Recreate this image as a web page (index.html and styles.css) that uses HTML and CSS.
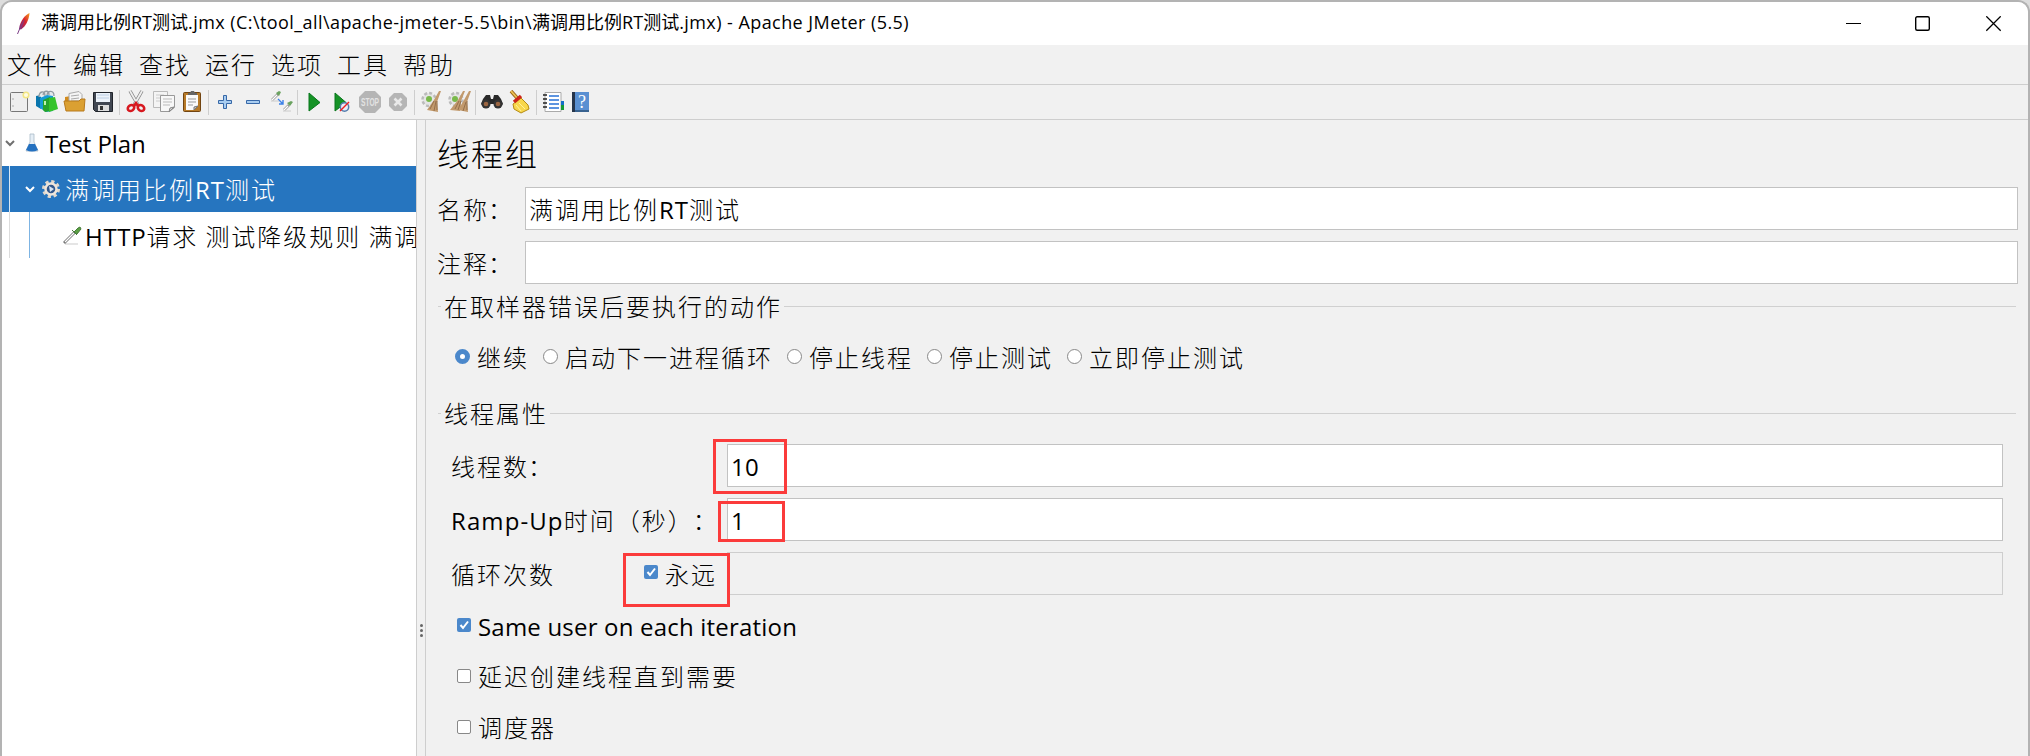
FILE: index.html
```html
<!DOCTYPE html>
<html lang="zh-CN">
<head>
<meta charset="utf-8">
<title>Apache JMeter (5.5)</title>
<link rel="stylesheet" href="styles.css">
</head>
<body>
<div class="window">
  <header class="titlebar">
    <svg class="feather" width="16" height="24" viewBox="0 0 16 24"><defs><linearGradient id="fe" x1="1" y1="0" x2="0" y2="1"><stop offset="0" stop-color="#f6a01c"/><stop offset=".45" stop-color="#d9232e"/><stop offset="1" stop-color="#7a2a80"/></linearGradient></defs><path d="M13.500 1C9 3 4 9 3 17l2 .5C10 14 13 8 13.500 1Z" fill="url(#fe)"/><path d="M4 16 1.500 22M8 8 4.500 16" stroke="#7b3d86" stroke-width="1"/></svg>
    <h1 class="title">满调用比例RT测试<span class="tl">.jmx (C:\tool_all\apache-jmeter-5.5\bin\</span>满调用比例RT测试<span class="tl">.jmx) - Apache JMeter (5.5)</span></h1>
    <svg class="controls" width="156" height="16" viewBox="0 0 156 16" fill="none" stroke="#000"><path d="M0 7.500h15"/><rect x="69.700" y=".7" width="13.600" height="13.600" rx="1.500" stroke-width="1.400"/><path d="m140.300.3 14.400 14.400m0-14.400-14.400 14.400" stroke-width="1.300"/></svg>
  </header>
  <nav class="menu"><span>文件</span><span>编辑</span><span>查找</span><span>运行</span><span>选项</span><span>工具</span><span>帮助</span></nav>
  <div class="toolbar">
    <svg viewBox="0 0 28 24"><rect x="5.500" y="2.500" width="17" height="19" rx="1" fill="#eee" stroke="#777"/><path d="M8 8v2m0 5v2" stroke="#aaa"/><circle cx="21" cy="5" r="2.800" fill="#fffce0" stroke="#f3e684" stroke-width="1.500"/></svg>
    <svg viewBox="0 0 28 24"><path d="M3 6 8 5v14l-5-3Z" fill="#0875ad"/><path d="M6 7c0-6 6-7 6-1m-2-1c1-5 6-5 6 0m-2 0c1-5 7-5 7 1" fill="#e5eaec" stroke="#929ca3" stroke-width="1.300"/><path d="m7 8 7-3 6 1v15l-7 1-6-4Z" fill="#159bd5"/><path d="m10 10 7-3v14l-5 1-2-2Z" fill="#25a42b"/><path d="m16 8 6-1 3 12-9 3Z" fill="#34c32a"/><path d="M12 11v4" stroke="#bff2ae" stroke-width="2"/></svg>
    <svg viewBox="0 0 28 24"><path d="M4 13V7l6-1v7" fill="#d28b1d"/><path d="M8 3.500 18 1.500l3 3v9H8Z" fill="#f5f5f5" stroke="#aaa"/><path d="m10 6 8-1m-8 4 8-1m-8 3h8" stroke="#aaa"/><path d="M3 11h15l2-2h4l-1 12H5Z" fill="#dba032" stroke="#b87a1c"/></svg>
    <svg viewBox="0 0 28 24"><path d="M4.500 2.500h19v19h-17l-2-2Z" fill="#414752" stroke="#20242b"/><path d="M7 3h14v9H7Z" fill="#edf3fa"/><path d="M8 5h12M8 8h12" stroke="#bed0e5"/><path d="M9 15h11v6H9Z" fill="#ddd"/><path d="M11 16h3v4h-3Z" fill="#333"/></svg>
    <i class="sep"></i>
    <svg viewBox="0 0 28 24"><path d="m8 1 8 14M20 1l-8 14" stroke="#888" stroke-width="3.400"/><path d="m8 1 8 14M20 1l-8 14" stroke="#eee" stroke-width="1.800"/><g fill="none" stroke="#d71920" stroke-width="2.600"><ellipse cx="9" cy="18" rx="3.400" ry="2.800" transform="rotate(-35 9 18)"/><ellipse cx="19" cy="18" rx="3.400" ry="2.800" transform="rotate(35 19 18)"/><path d="m12 16 2-3 2 3"/></g></svg>
    <svg viewBox="0 0 28 24"><path d="M3.500 1.500h14v16h-14Z" fill="#f4f4f4" stroke="#bbb"/><path d="M6 5h8M6 8h8M6 11h4" stroke="#ccc"/><path d="M10.500 5.500h14v12l-5 4h-9Z" fill="#f8f8f8" stroke="#999"/><path d="M13 9h9m-9 3h9m-9 3h7" stroke="#bbb"/><path d="m24 17-4 1-1 4Z" fill="#ddd" stroke="#888"/></svg>
    <svg viewBox="0 0 28 24"><rect x="5.500" y="2.500" width="17" height="19" rx="1" fill="#b77a28" stroke="#714411"/><path d="M8 5h12v11l-4 4H8Z" fill="#fafafa"/><path d="M10 9h8m-8 3h8m-8 3h5" stroke="#999"/><path d="M10 5V3h2l1-2h3l1 2h2v2Z" fill="#666"/><path d="m20 16-4 1v3Z" fill="#ccc" stroke="#777"/></svg>
    <i class="sep"></i>
    <svg viewBox="0 0 28 24"><path d="M12.500 5.500h3v5h5v3h-5v5h-3v-5h-5v-3h5Z" fill="#a9cdf0" stroke="#3768a8"/></svg>
    <svg viewBox="0 0 28 24"><path d="M7.500 10.500h13v3h-13Z" fill="#a9cdf0" stroke="#3768a8"/></svg>
    <svg viewBox="0 0 28 24"><path d="m5 10 6-6m6 16 5-5" stroke="#999" stroke-width="2.600"/><path d="m5 10 5-5m7 15 4-4" stroke="#fff" stroke-width="1.200"/><path d="m9 3 3 3 2-4-2-1Zm11 10 3 3 3-4-2-1Z" fill="#6aa25f"/><path d="m11 9 5 5m0-4v4h-4" stroke="#3b80e8" stroke-width="1.400" fill="none"/><path d="M4 11h8m4 10h8" stroke="#ccc"/></svg>
    <i class="sep"></i>
    <svg viewBox="0 0 28 24"><path d="m9 3 11 9.500L9 21Z" fill="#159326" stroke="#08761c"/></svg>
    <svg viewBox="0 0 28 24"><path d="m7 3 11 9.500L7 21Z" fill="#159326" stroke="#08761c"/><circle cx="16.500" cy="17" r="4.200" fill="#e8eef8" stroke="#567dad" stroke-width="1.500"/><path d="m12 21 9-9" stroke="#e22" stroke-width="1.500"/></svg>
    <svg viewBox="0 0 28 24"><path d="M9 1h10l6 6v10l-6 6H9l-6-6V7Z" fill="#b5b5b5"/><text x="14" y="16" text-anchor="middle" textLength="18" lengthAdjust="spacingAndGlyphs" class="stoptext">STOP</text></svg>
    <svg viewBox="0 0 28 24"><path d="M10 3h8l5 5v8l-5 5h-8l-5-5V8Z" fill="#b5b5b5"/><path d="m10.500 8.500 7 7m0-7-7 7" stroke="#e9e9e9" stroke-width="2.600"/></svg>
    <i class="sep"></i>
    <svg viewBox="0 0 28 24"><circle cx="12" cy="9.500" r="6.500" fill="#e5e5e5" stroke="#bbb" stroke-width="2.500" stroke-dasharray="3 2"/><circle cx="12" cy="9" r="3" fill="#79b94b"/><path d="m22 1 2 0-4 11 1 10-11-2 7-10Z" fill="#c29a6d"/><path d="m19 11-2 10m0-10-4 8m7-8v9" stroke="#94704c"/></svg>
    <svg viewBox="0 0 28 24"><circle cx="11" cy="9.500" r="6.500" fill="#e5e5e5" stroke="#bbb" stroke-width="2.500" stroke-dasharray="3 2"/><circle cx="10" cy="9" r="3" fill="#79b94b"/><path d="m18 1 2 0-4 10-1 10-10-1 8-10Zm6 0h2l-4 11 1 10-10-2 6-10Z" fill="#c29a6d"/><path d="m21 12-3 9m-4-10-4 8m12-8v9m-6-9-3 9" stroke="#94704c"/></svg>
    <i class="sep"></i>
    <svg viewBox="0 0 28 24"><path d="m5 9 3-4h4l1 4h2l1-4h4l3 4 2 5-4 4-5-4h-4l-5 4-4-4Z" fill="#292929"/><circle cx="8" cy="14" r="4.500" fill="#333"/><circle cx="20" cy="14" r="4.500" fill="#333"/><circle cx="8" cy="14" r="2.300" fill="#9b6541"/><circle cx="20" cy="14" r="2.300" fill="#9b6541"/></svg>
    <svg viewBox="0 0 28 24"><path d="m5 1 7 8" stroke="#9b6517" stroke-width="3.500"/><path d="m5 1 7 8" stroke="#edc354" stroke-width="1.800"/><path d="m15 8 7 7 1 4-8 4-7-4-1-5 4-3Z" fill="#f8d74c" stroke="#b58b14"/><path d="m8 12 7-6" stroke="#cd2419" stroke-width="3.600"/><path d="m13 13 6 6m-9-4 5 6" stroke="#fff19b"/></svg>
    <i class="sep"></i>
    <svg viewBox="0 0 28 24"><path d="M6 2.500h16v19H6Z" fill="#fff" stroke="#aaa"/><path d="M10 6h10m-10 4h10m-10 4h10m-10 4h10" stroke="#2971d6" stroke-width="1.600"/><path d="M4 5h4M4 9h4m-4 4h4m-4 4h4" stroke="#222" stroke-width="1.600"/><path d="M22 11h3v4h-3Z" fill="#1670c8"/><path d="M22 15h3v5h-3Z" fill="#169b36"/></svg>
    <svg viewBox="0 0 28 24"><path d="M5 2h17v20H5Z" fill="#5a90d2"/><path d="M5 2h3v20H5Z" fill="#26354b"/><path d="M8 20h14v2H8Z" fill="#38628f"/><text x="15" y="17.500" text-anchor="middle" class="helptext">?</text></svg>
  </div>
  <main class="workspace">
    <aside class="tree">
      <div class="node root"><svg class="chev" width="10" height="8" viewBox="0 0 10 8"><path d="m1 2 4 4 4-4"/></svg><svg class="flask" width="16" height="22" viewBox="0 0 16 22"><path d="M6 2h4v8l4 9H2l4-9Z" fill="#e5eef6" stroke="#a9bac8" stroke-width=".8"/><path d="m5 12 6 0 3 6q-6 3-12 0Z" fill="#2471c0"/></svg><span class="latin plan">Test Plan</span></div>
      <div class="node selected"><svg class="chev" width="10" height="8" viewBox="0 0 10 8"><path d="m1 2 4 4 4-4"/></svg><svg class="gear" width="20" height="20" viewBox="0 0 20 20"><circle cx="10" cy="10" r="7.500" stroke="#e2d8cc" stroke-width="3" stroke-dasharray="3.200 2.690"/><circle cx="10" cy="10" r="5.500" fill="#33588c" stroke="#eee5db" stroke-width="2.500"/><path d="m8 7 5 3-4 3Z" fill="#d8e5f2"/></svg><span>满调用比例<b class="rt">RT</b>测试</span></div>
      <div class="node child"><svg width="20" height="20" viewBox="0 0 20 20"><path d="M3 18h13" stroke="#ddd" stroke-width="1.500"/><path d="M2 17 13 6" stroke="#777" stroke-width="2.800"/><path d="M3 16 12 7" stroke="#fff" stroke-width="1.300"/><path d="m10 4 5 5m-3-3 4-4 2-1 1 2-4 5Z" fill="#5ba143" stroke="#477b3a"/></svg><span><b class="http">HTTP</b>请求<i class="gap"></i>测试降级规则<i class="gap"></i>满调</span></div>
    </aside>
    <div class="divider"><i></i><i></i><i></i></div>
    <section class="form">
      <h2>线程组</h2>
      <div class="field"><label>名称<i class="colon">：</i></label><div class="input">满调用比例<b class="rt">RT</b>测试</div></div>
      <div class="field"><label>注释<i class="colon">：</i></label><div class="input"></div></div>
      <div class="group actions">
        <div class="legend"><span>在取样器错误后要执行的动作</span></div>
        <div class="radios"><label><i class="radio on"></i>继续</label><label><i class="radio"></i>启动下一进程循环</label><label><i class="radio"></i>停止线程</label><label><i class="radio"></i>停止测试</label><label><i class="radio"></i>立即停止测试</label></div>
      </div>
      <div class="group props">
        <div class="legend"><span>线程属性</span></div>
        <div class="prop"><label>线程数<i class="colon">：</i></label><div class="input"><span class="latin">10</span></div><em class="mark m1"></em></div>
        <div class="prop"><label><b class="ramp">Ramp-Up</b>时间（秒）<i class="colon">：</i></label><div class="input"><span class="latin">1</span></div><em class="mark m2"></em></div>
        <div class="prop"><label>循环次数</label><label class="forever"><i class="check on"><svg viewBox="0 0 14 14"><path d="m3.500 7 2.500 3 5-6.500"/></svg></i>永远</label><div class="input disabled"></div><em class="mark m3"></em></div>
        <div class="checks">
          <label><i class="check on"><svg viewBox="0 0 14 14"><path d="m3.500 7 2.500 3 5-6.500"/></svg></i><span class="latin same">Same user on each iteration</span></label>
          <label><i class="check"></i><span class="lift">延迟创建线程直到需要</span></label>
          <label><i class="check"></i><span class="lift">调度器</span></label>
        </div>
      </div>
    </section>
  </main>
</div>
</body>
</html>
```
FILE: styles.css
```css
* { box-sizing: border-box; }
body { margin: 0; background: #ddd; color: #000; font: 300 24px/36px "Noto Sans CJK SC Light", "Noto Sans CJK SC", sans-serif; letter-spacing: 2px; white-space: nowrap; overflow: hidden; text-spacing-trim: space-all; }
.window { height: 756px; border: 2px solid #b3b3b3; border-bottom: 0; border-radius: 12px 12px 0 0; background: #f1f1f1; overflow: hidden; }
i, em { font-style: normal; }
b { font-family: "Open Sans", "Noto Sans", sans-serif; font-weight: 400; line-height: 1; }
.latin { font-family: "Open Sans", "Noto Sans", sans-serif; font-weight: 400; font-size: 24px; letter-spacing: .3px; }
.rt { letter-spacing: 1px; }
.http { letter-spacing: .7px; }
.ramp { letter-spacing: 1.1px; }
.latin.plan { margin: 2px 0 0 -1px; letter-spacing: -.1px; }
.latin.same { letter-spacing: .2px; }
.colon { margin-left: -1px; }
.lift { margin-bottom: 2px; margin-top: -2px; }
.titlebar { height: 43px; background: #fff; display: flex; align-items: center; padding: 0 26px 0 14px; }
.feather { margin-right: 9px; }
.title { margin: 0 0 3px; font: 400 18px/38px "Open Sans", "Noto Sans CJK SC", sans-serif; letter-spacing: 0; }
.tl { letter-spacing: .43px; }
.controls { margin-left: auto; }
.menu { height: 40px; border-bottom: 1px solid #cecece; padding: 1px 0 0 5px; display: flex; gap: 14px; line-height: 36px; }
.toolbar { height: 35px; border-bottom: 1px solid #cecece; display: flex; align-items: center; padding-left: 3px; }
.toolbar svg { width: 28px; height: 24px; fill: none; flex: none; }
.sep { width: 1px; height: 25px; margin: 0 2px; background: #cecece; }
.stoptext { font: bold 10px "Liberation Sans"; letter-spacing: 0; fill: #e3e3e3; }
.helptext { font: 18px "Liberation Serif"; letter-spacing: 0; fill: #fff; }
.workspace { display: flex; height: 636px; }
.tree { width: 414px; background: #fff; overflow: hidden; }
.node { height: 46px; display: flex; align-items: center; }
.chev { fill: none; stroke: #707070; stroke-width: 2; flex: none; }
.root { padding-left: 3px; }
.flask { margin: 0 6px 0 9px; }
.selected { background: linear-gradient(90deg, transparent 7px, #d8e8f6 7px 8px, transparent 8px), #2675bf; color: #fff; padding-left: 23px; }
.selected .chev { stroke: #fff; }
.gear { fill: none; margin: 0 4px 0 6px; }
.child { background: linear-gradient(90deg, transparent 7px, #dcdcdc 7px 8px, transparent 8px 27px, #7db4e3 27px 28px, transparent 28px); padding: 1px 0 0 60px; }
.child svg { fill: none; margin-right: 3px; flex: none; }
.gap { display: inline-block; width: 7px; }
.divider { width: 10px; border: solid #cecece; border-width: 0 1px; display: flex; flex-direction: column; align-items: center; gap: 2px; padding-top: 504px; }
.divider i { width: 3px; height: 3px; border-radius: 50%; background: #666; }
.form { flex: 1; padding: 9px 10px 0 11px; }
h2 { margin: 0; height: 58px; font-size: 32px; font-weight: inherit; line-height: 46px; letter-spacing: 2px; }
.field { display: flex; height: 43px; margin-bottom: 11px; align-items: center; }
.field > label { width: 88px; }
.input { flex: 1; height: 43px; border: 1px solid #c2c2c2; background: #fff; padding-left: 3px; line-height: 41px; }
.input.disabled { background: #f1f1f1; border-color: #cecece; }
.group { margin: 0 2px 0 1px; }
.legend { display: flex; align-items: center; height: 36px; }
.legend::before { content: ""; width: 3px; height: 1px; background: #d0d0d0; margin-right: 3px; }
.legend::after { content: ""; height: 1px; flex: 1; background: #d0d0d0; margin-left: 2px; }
.actions { height: 107px; margin-top: -7px; }
.radios { display: flex; gap: 14px; padding: 15px 0 0 17px; }
.radios label, .checks label, .forever { display: flex; align-items: center; }
.radio { width: 15px; height: 15px; border: 1px solid #888; border-radius: 50%; background: #fff; margin: -2px 7px 0 0; flex: none; }
.radio.on { border: 5px solid #4b88cb; }
.check { width: 14px; height: 14px; border: 1px solid #888; border-radius: 2px; background: #fff; margin: -4px 7px 0 0; flex: none; }
.check.on { border: 0; background: #4b88cb; }
.check svg { display: block; fill: none; stroke: #fff; stroke-width: 2; }
.props .legend { margin-bottom: 13px; }
.prop { position: relative; display: flex; align-items: center; height: 43px; margin: 0 13px 11px 13px; }
.prop > label:first-child { width: 276px; flex: none; }
.prop:nth-child(4) > label:first-child { width: 193px; }
.forever { width: 83px; }
.mark { position: absolute; border: 3px solid #fb3b3b; }
.m1 { left: 262px; top: -5px; width: 74px; height: 55px; }
.m2 { left: 267px; top: 3px; width: 67px; height: 41px; }
.m3 { left: 172px; top: 1px; width: 107px; height: 54px; }
.checks { display: flex; flex-direction: column; gap: 15px; padding: 3px 0 0 19px; }
```
